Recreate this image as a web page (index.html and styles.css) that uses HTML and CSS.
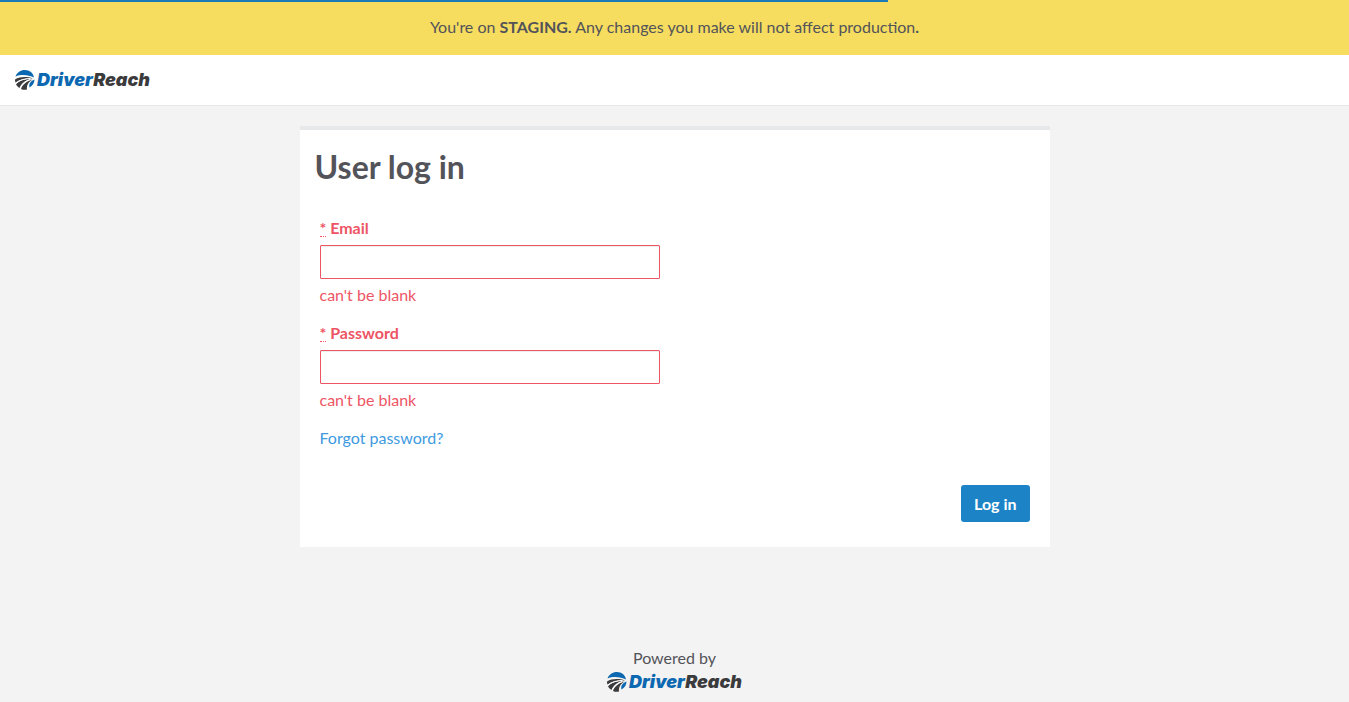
FILE: index.html
```html
<!DOCTYPE html>
<html lang="en">
<head>
<meta charset="utf-8">
<meta name="viewport" content="width=device-width, initial-scale=1">
<title>DriverReach | User log in</title>
<link rel="stylesheet" href="styles.css">
</head>
<body>
<svg class="sprite" aria-hidden="true">
  <symbol id="road-mark" viewBox="0 0 40 40">
    <path fill="#0c68b0" d="M1 13C4 5 11 0 20 0c9 0 17 6 18 15-10-5-25-7-37-2z"/>
    <path fill="#0c68b0" d="M39 19c0 7-4 13-10 16-2-7 1-12 10-16z"/>
    <path fill="#3b3b3d" d="M0 19c10-6 24-6 36-2-12-1-26 1-35 8-1-2-1-4-1-6z"/>
    <path fill="#3b3b3d" d="M2 29c6-8 18-11 31-11-11 2-20 8-24 18-3-2-5-4-7-7z"/>
    <path fill="#3b3b3d" d="M12 38c3-9 11-16 23-19-8 5-12 11-11 20-4 1-8 1-12-1z"/>
    <path fill="none" stroke="#fff" stroke-width="2" d="M1 27c7-7 18-10 30-10M10 37c3-9 10-15 20-18"/>
  </symbol>
</svg>
<div class="progress"></div>
<div class="banner">You're on <strong>STAGING.</strong> Any changes you make will not affect production<strong>.</strong></div>
<header class="header">
  <a class="brand" href="#"><svg class="mark" aria-hidden="true"><use href="#road-mark"/></svg><span class="wordmark"><span class="driver">Driver</span>Reach</span></a>
</header>
<main class="main">
  <section class="card">
    <h1 class="title">User log in</h1>
    <form class="form" novalidate>
      <div class="field">
        <label class="label" for="email"><abbr title="required">*</abbr> Email</label>
        <input class="input" id="email" type="email" aria-describedby="email-error">
        <span class="error" id="email-error">can't be blank</span>
      </div>
      <div class="field">
        <label class="label" for="password"><abbr title="required">*</abbr> Password</label>
        <input class="input" id="password" type="password" aria-describedby="password-error">
        <span class="error" id="password-error">can't be blank</span>
      </div>
      <a class="forgot" href="#">Forgot password?</a>
      <div class="actions"><button class="submit" type="submit">Log in</button></div>
    </form>
  </section>
</main>
<footer class="footer">
  <span>Powered by</span>
  <a class="brand" href="#"><svg class="mark" aria-hidden="true"><use href="#road-mark"/></svg><span class="wordmark"><span class="driver">Driver</span>Reach</span></a>
</footer>
</body>
</html>
```
FILE: styles.css
```css
* { box-sizing: border-box; }
body {
  margin: 0;
  min-height: 100vh;
  display: flex;
  flex-direction: column;
  background: #f3f3f3;
  color: #53535a;
  font: 16px/24px Lato, sans-serif;
}
a { color: #3e9adf; text-decoration: none; }
.sprite { position: absolute; width: 0; height: 0; }
.progress {
  position: absolute;
  top: 0;
  left: 0;
  width: 65.8%;
  height: 2px;
  background: #1b7ab8;
}
.banner {
  padding: 15px 15px 16px;
  background: #f6dd5f;
  text-align: center;
}
.header {
  padding: 13px 15px;
  background: #fff;
  border-bottom: 1px solid #e7e7e7;
}
.brand { display: flex; align-items: center; gap: 2px; width: max-content; }
.mark { width: 20px; height: 20px; }
.wordmark {
  font: italic 900 18px/24px Inter, sans-serif;
  color: #3b3b3d;
}
.driver { color: #0c68b0; }
.main { padding: 20px 15px; }
.card {
  max-width: 750px;
  margin: 0 auto;
  padding: 15px 15px 25px;
  background: #fff;
  border-top: 4px solid #e6e8ea;
}
.title {
  margin: 0;
  font-size: 32px;
  line-height: 44px;
  font-weight: 700;
}
.form { padding: 27px 5px 0; }
.field {
  display: flex;
  flex-direction: column;
  margin-bottom: 14px;
  color: #ed5565;
}
.label { font-weight: 700; margin-bottom: 5px; }
.label abbr {
  display: inline-block;
  line-height: 16px;
  text-decoration: none;
  border-bottom: 1px dotted #ed5565;
}
.input {
  width: 100%;
  max-width: 340px;
  height: 34px;
  padding: 6px 12px;
  border: 1px solid #ed5565;
  border-radius: 1px;
  background: #fff;
  box-shadow: inset 0 1px 1px rgba(0, 0, 0, 0.075);
  font: inherit;
}
.error { margin-top: 4px; }
.actions { display: flex; justify-content: flex-end; margin-top: 35px; }
.submit {
  padding: 7px 13px 6px;
  border: 0;
  border-radius: 3px;
  background: #1c84c6;
  color: #fff;
  font: 700 16px/24px Lato, sans-serif;
}
.footer {
  display: flex;
  flex-direction: column;
  align-items: center;
  margin-top: auto;
  padding-bottom: 8px;
}
```
